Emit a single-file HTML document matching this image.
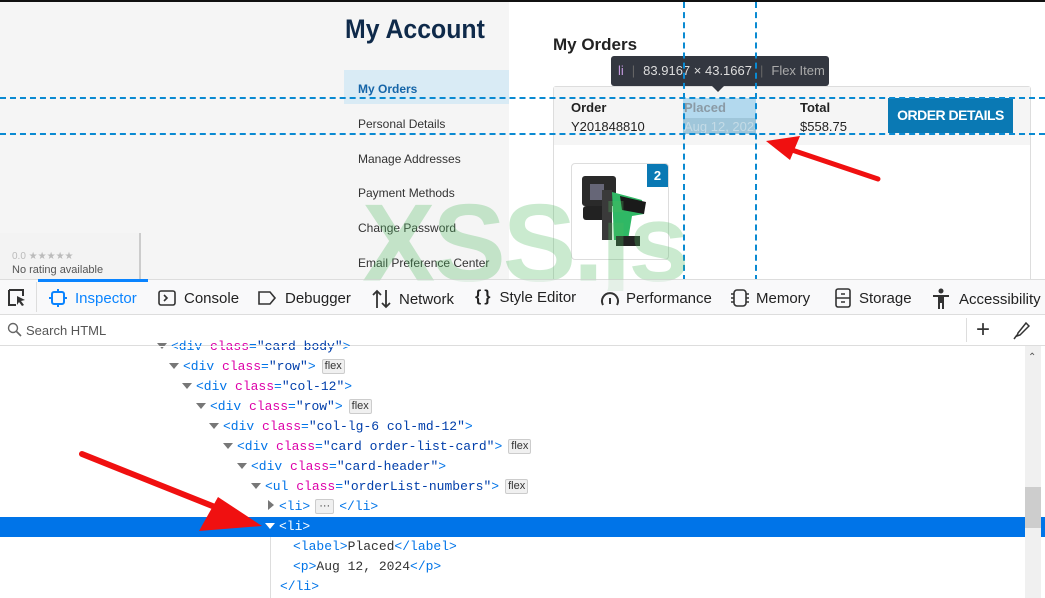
<!DOCTYPE html>
<html><head><meta charset="utf-8"><style>
*{margin:0;padding:0;box-sizing:border-box}
body{width:1045px;height:598px;overflow:hidden;position:relative;background:#fff;font-family:"Liberation Sans",sans-serif}
.abs{position:absolute}
#page{left:0;top:0;width:1045px;height:279px;overflow:hidden;background:#fff;border-top:2px solid #111}
.side{color:#333;font-size:12px;left:358px}
.row{position:absolute;left:0;width:1025px;height:20px;line-height:20px;white-space:pre;font-family:"Liberation Mono",monospace;font-size:13px;color:#0074e8}
.a{color:#dd00a9}.v{color:#003eaa}.k{color:#333}
.tri{display:inline-block;width:0;height:0;border-left:5px solid transparent;border-right:5px solid transparent;border-top:6px solid #777;margin-right:4px;vertical-align:1px}
.badge{display:inline-block;font-family:"Liberation Sans",sans-serif;font-size:11px;color:#333;background:#f0f0f0;border:1px solid #ccc;border-radius:2px;line-height:13px;padding:0 2px;margin-left:6px;vertical-align:1px}
.tb{position:absolute;top:288px;font-size:15px;color:#222;display:flex;align-items:center}
</style></head><body>
<div id="page" class="abs">
 <div class="abs" style="left:0;top:0;width:509px;height:279px;background:#f5f5f5"></div>
 <div class="abs" style="left:345px;top:12px;font-size:27px;font-weight:bold;color:#0f2a4a;transform:scaleX(0.92);transform-origin:left">My Account</div>
 <div class="abs" style="left:344px;top:68px;width:165px;height:34px;background:#d9ebf5"></div>
 <div class="abs side" style="top:80px;color:#1565a8;font-weight:bold">My Orders</div>
 <div class="abs side" style="top:115px">Personal Details</div>
 <div class="abs side" style="top:150px">Manage Addresses</div>
 <div class="abs side" style="top:184px">Payment Methods</div>
 <div class="abs side" style="top:219px">Change Password</div>
 <div class="abs side" style="top:254px">Email Preference Center</div>
 <div class="abs" style="left:0;top:231px;width:141px;height:48px;background:#f3f3f3;border-right:2px solid #ccc"></div>
 <div class="abs" style="left:12px;top:249px;font-size:10px;color:#bbb">0.0 ★★★★★</div>
 <div class="abs" style="left:12px;top:262px;font-size:11px;color:#555">No rating available</div>
 <div class="abs" style="left:553px;top:33px;font-size:17px;font-weight:bold;color:#222">My Orders</div>
 <div class="abs" style="left:553px;top:84px;width:478px;height:200px;border:1px solid #ddd;border-radius:3px;background:#fff"></div>
 <div class="abs" style="left:554px;top:85px;width:476px;height:58px;background:#f5f5f5"></div>
 <div class="abs" style="left:571px;top:98px;font-size:13px;font-weight:bold;color:#222">Order</div>
 <div class="abs" style="left:571px;top:117px;font-size:13px;color:#222">Y201848810</div>
 <div class="abs" style="left:683px;top:96px;width:73px;height:36px;background:#b3d9ee"></div>
 <div class="abs" style="left:684px;top:98px;font-size:13px;font-weight:bold;color:#8a9aa5">Placed</div>
 <div class="abs" style="left:683px;top:116px;width:73px;height:16px;background:#9fc6da"></div>
 <div class="abs" style="left:684px;top:117px;font-size:13px;color:#c4dbe6;white-space:nowrap;width:72px;overflow:hidden">Aug 12, 2024</div>
 <div class="abs" style="left:800px;top:98px;font-size:13px;font-weight:bold;color:#222">Total</div>
 <div class="abs" style="left:800px;top:117px;font-size:13px;color:#222">$558.75</div>
 <div class="abs" style="left:888px;top:96px;width:125px;height:35px;background:#0a79b4;color:#fff;font-weight:bold;font-size:14px;line-height:35px;text-align:center;letter-spacing:-0.5px">ORDER DETAILS</div>
 <div class="abs" style="left:571px;top:161px;width:98px;height:97px;border:1px solid #ddd;border-radius:4px;background:#fff"></div>
 <div class="abs" style="left:647px;top:162px;width:21px;height:23px;background:#0a79b4;color:#fff;font-weight:bold;font-size:13px;text-align:center;line-height:23px;border-radius:0 3px 0 0">2</div>
 <svg class="abs" style="left:580px;top:168px" width="80" height="85"><rect x="2" y="6" width="34" height="30" rx="3" fill="#2a2a2a"/><rect x="10" y="14" width="14" height="16" fill="#667"/><rect x="3" y="36" width="22" height="14" rx="3" fill="#222"/><rect x="22" y="20" width="10" height="50" fill="#3a3a3a"/><path d="M32 22 L62 30 L64 44 L52 46 L48 70 L34 70 Z" fill="#2fb865"/><path d="M40 26 L66 32 L64 44 L42 40Z" fill="#1a1a1a"/><rect x="36" y="66" width="24" height="10" fill="#222"/></svg>
 <div class="abs" style="left:611px;top:54px;width:218px;height:30px;background:#333740;border-radius:3px;color:#ddd;font-size:13px;line-height:30px;white-space:nowrap"><span style="color:#c49adf;margin-left:7px">li</span><span style="color:#666;margin:0 8px">|</span>83.9167 × 43.1667<span style="color:#666;margin:0 8px">|</span><span style="color:#aaa">Flex Item</span></div>
 <div class="abs" style="left:712px;top:84px;width:0;height:0;border-left:6px solid transparent;border-right:6px solid transparent;border-top:6px solid #333740"></div>
 <div class="abs" style="left:0;top:95px;width:1045px;border-top:2px dashed #0a8ad2"></div>
 <div class="abs" style="left:0;top:131px;width:1045px;border-top:2px dashed #0a8ad2"></div>
 <div class="abs" style="left:683px;top:0;height:279px;border-left:2px dashed #0a8ad2"></div>
 <div class="abs" style="left:755px;top:0;height:279px;border-left:2px dashed #0a8ad2"></div>
</div>
<!-- toolbar -->
<div class="abs" style="left:0;top:279px;width:1045px;height:36px;background:#f9f9fa;border-top:1px solid #ddd;border-bottom:1px solid #ddd"></div>
<div class="abs" style="left:38px;top:279px;width:110px;height:3px;background:#0a84ff"></div>
<div class="abs" style="left:36px;top:282px;height:30px;border-left:1px solid #ddd"></div>
<svg class="abs" style="left:6px;top:288px" width="22" height="20"><path d="M3 2h14v6M3 2v15h7" fill="none" stroke="#333" stroke-width="2"/><path d="M11 8l8 4-4 1 3 4-2 1-3-4-2 3z" fill="#333"/></svg>
<div class="tb" style="left:48px;color:#0a84ff"><svg width="20" height="20"><rect x="4" y="4" width="12" height="12" rx="2" fill="none" stroke="#0a84ff" stroke-width="2"/><path d="M10 1v3M10 16v3M1 10h3M16 10h3" stroke="#0a84ff" stroke-width="2"/></svg><span style="margin-left:7px">Inspector</span></div>
<div class="tb" style="left:157px"><svg width="20" height="20"><rect x="2" y="3" width="16" height="14" rx="2" fill="none" stroke="#333" stroke-width="1.6"/><path d="M7 7l3 3-3 3" fill="none" stroke="#333" stroke-width="1.6"/></svg><span style="margin-left:7px">Console</span></div>
<div class="tb" style="left:256px"><svg width="22" height="20"><path d="M3 4h11l5 6-5 6H3z" fill="none" stroke="#333" stroke-width="1.6"/></svg><span style="margin-left:7px">Debugger</span></div>
<div class="tb" style="left:371px"><svg width="22" height="22"><path d="M6 20V3M2 7l4-4 4 4M15 2v17M11 15l4 4 4-4" fill="none" stroke="#333" stroke-width="1.8"/></svg><span style="margin-left:6px">Network</span></div>
<div class="tb" style="left:475px"><span style="font-weight:bold;font-size:16px;letter-spacing:3px">{}</span><span style="margin-left:6px">Style Editor</span></div>
<div class="tb" style="left:599px"><svg width="22" height="20"><path d="M4 17A8 8 0 1 1 18 17" fill="none" stroke="#333" stroke-width="2"/><path d="M11 10v6" stroke="#333" stroke-width="2"/></svg><span style="margin-left:5px">Performance</span></div>
<div class="tb" style="left:729px"><svg width="22" height="20"><rect x="5" y="2" width="12" height="16" rx="3" fill="none" stroke="#333" stroke-width="1.6"/><path d="M2 6h3M2 10h3M2 14h3M17 6h3M17 10h3M17 14h3" stroke="#333" stroke-width="1.4"/></svg><span style="margin-left:5px">Memory</span></div>
<div class="tb" style="left:833px"><svg width="20" height="20"><rect x="3" y="1" width="14" height="18" rx="2" fill="none" stroke="#333" stroke-width="1.6"/><path d="M3 10h14M8 6h4M8 14h4" stroke="#333" stroke-width="1.6"/></svg><span style="margin-left:6px">Storage</span></div>
<div class="tb" style="left:931px"><svg width="20" height="22"><circle cx="10" cy="3" r="2.5" fill="#333"/><path d="M2 7h16v2h-5v12h-2v-6H9v6H7V9H2z" fill="#333"/></svg><span style="margin-left:8px">Accessibility</span></div>
<!-- watermark -->
<div class="abs" style="left:0;top:0;width:1045px;height:279px;overflow:hidden;z-index:5;pointer-events:none"><div class="abs" style="left:362px;top:180px;font-size:110px;font-weight:bold;color:rgba(80,185,95,0.3);letter-spacing:-3px;white-space:nowrap">XSS.js</div></div>
<div class="abs" style="left:0;top:279px;width:1045px;height:12px;overflow:hidden;z-index:5;pointer-events:none"><div class="abs" style="left:362px;top:-99px;font-size:110px;font-weight:bold;color:rgba(80,185,95,0.12);letter-spacing:-3px;white-space:nowrap">XSS.js</div></div>
<!-- search -->
<div class="abs" style="left:0;top:315px;width:1045px;height:31px;border-bottom:1px solid #ddd;background:#fff"></div>
<svg class="abs" style="left:7px;top:322px" width="16" height="16"><circle cx="6" cy="6" r="4.5" fill="none" stroke="#666" stroke-width="1.4"/><path d="M9.5 9.5L14 14" stroke="#666" stroke-width="1.6"/></svg>
<div class="abs" style="left:26px;top:323px;font-size:13px;color:#555">Search HTML</div>
<div class="abs" style="left:966px;top:318px;height:24px;border-left:1px solid #ddd"></div>
<div class="abs" style="left:976px;top:315px;font-size:24px;color:#333;line-height:30px">+</div>
<svg class="abs" style="left:1012px;top:321px" width="18" height="20"><path d="M14 2l3 3-9 9-3 1 1-3z" fill="none" stroke="#333" stroke-width="1.5"/><path d="M5 14l-3 4" stroke="#333" stroke-width="1.5"/></svg>
<!-- tree -->
<div class="row" style="top:337px;left:157px"><span class="tri"></span>&lt;div <span class="a">class</span>=<span class="v">"card-body"</span>&gt;</div>
<div class="abs" style="left:0;top:346px;width:1025px;height:1px;background:#fff"></div>
<div class="row" style="top:357px;left:169px"><span class="tri"></span>&lt;div <span class="a">class</span>=<span class="v">"row"</span>&gt;<span class="badge">flex</span></div>
<div class="row" style="top:377px;left:182px"><span class="tri"></span>&lt;div <span class="a">class</span>=<span class="v">"col-12"</span>&gt;</div>
<div class="row" style="top:397px;left:196px"><span class="tri"></span>&lt;div <span class="a">class</span>=<span class="v">"row"</span>&gt;<span class="badge">flex</span></div>
<div class="row" style="top:417px;left:209px"><span class="tri"></span>&lt;div <span class="a">class</span>=<span class="v">"col-lg-6 col-md-12"</span>&gt;</div>
<div class="row" style="top:437px;left:223px"><span class="tri"></span>&lt;div <span class="a">class</span>=<span class="v">"card order-list-card"</span>&gt;<span class="badge">flex</span></div>
<div class="row" style="top:457px;left:237px"><span class="tri"></span>&lt;div <span class="a">class</span>=<span class="v">"card-header"</span>&gt;</div>
<div class="row" style="top:477px;left:251px"><span class="tri"></span>&lt;ul <span class="a">class</span>=<span class="v">"orderList-numbers"</span>&gt;<span class="badge">flex</span></div>
<div class="row" style="top:497px;left:268px"><span style="display:inline-block;border-top:5px solid transparent;border-bottom:5px solid transparent;border-left:6px solid #777;margin-right:5px"></span>&lt;li&gt;<span class="badge" style="margin:0 5px;padding:0 3px">···</span>&lt;/li&gt;</div>
<div class="abs" style="left:0;top:517px;width:1025px;height:20px;background:#0074e8"></div>
<div class="abs" style="left:1041px;top:517px;width:4px;height:20px;background:#0074e8"></div>
<div class="row" style="top:517px;left:265px;color:#fff"><span class="tri" style="border-top-color:#fff"></span>&lt;li&gt;</div>
<div class="abs" style="left:270px;top:537px;height:61px;border-left:1px solid #ddd"></div>
<div class="row" style="top:537px;left:293px">&lt;label&gt;<span class="k">Placed</span>&lt;/label&gt;</div>
<div class="row" style="top:557px;left:293px">&lt;p&gt;<span class="k">Aug 12, 2024</span>&lt;/p&gt;</div>
<div class="row" style="top:577px;left:280px">&lt;/li&gt;</div>
<!-- scrollbar -->
<div class="abs" style="left:1025px;top:346px;width:16px;height:252px;background:#f0f0f0"></div>
<div class="abs" style="left:1028px;top:352px;font-size:10px;color:#555">⌃</div>
<div class="abs" style="left:1025px;top:487px;width:16px;height:41px;background:#cdcdcd"></div>
<!-- arrows -->
<svg class="abs" style="left:0;top:0;z-index:10" width="1045" height="598">
<path d="M878 179 L792 150" stroke="#f01010" stroke-width="5" stroke-linecap="round"/>
<path d="M766 141 L800 136 L790 160 Z" fill="#f01010"/>
<path d="M82 454 L235 515" stroke="#f01010" stroke-width="6" stroke-linecap="round"/>
<path d="M262 526 L199 531 L218 497 Z" fill="#f01010"/>
</svg>
</body></html>
